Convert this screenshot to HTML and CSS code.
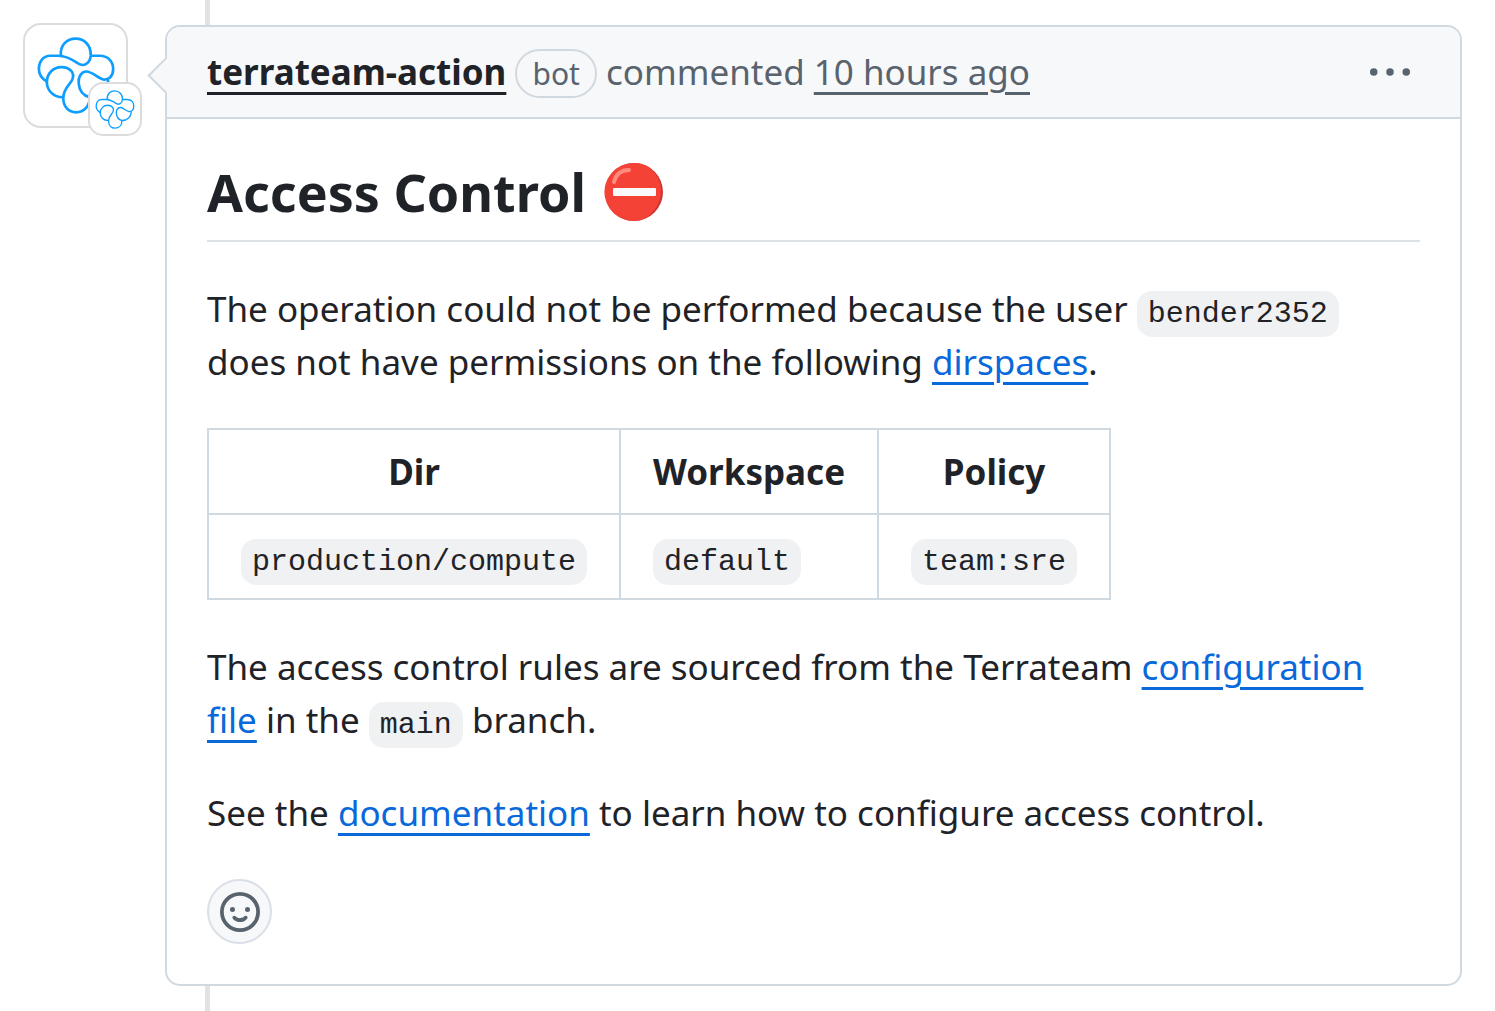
FILE: index.html
```html
<!DOCTYPE html>
<html lang="en">
<head>
    <meta charset="UTF-8">
    <meta name="viewport" content="width=device-width, initial-scale=1.0">
    <title>Access Control</title>
    <link rel="stylesheet" href="styles.css">
</head>
<body>
    <svg width="0" height="0" class="sprite" aria-hidden="true">
        <symbol id="logo" viewBox="8 7 232 230">
            <path d="M79 63C75 30 98 12 123 12C149 12 169 32 168 62C166 87 147 97 130 86C110 72 92 63 70 63H47C25 63 13 82 13 102C13 119 22 132 37 140"/>
            <path d="M85 187C55 187 37 165 37 142C37 115 57 97 80 97C107 97 121 115 113 134C107 149 86 160 86 190C86 215 102 232 124 232C148 232 165 214 165 187"/>
            <path d="M168 63H195C222 63 235 82 235 103C235 124 222 136 205 134C190 130 172 110 155 110C139 110 130 128 132 145C134 170 148 183 165 187C197 187 219 165 220 135"/>
        </symbol>
    </svg>

    <main class="timeline">
        <a href="#" class="avatar" aria-label="terrateam-action">
            <svg class="avatar-logo"><use href="#logo"/></svg>
            <span class="avatar-badge">
                <svg class="badge-logo"><use href="#logo"/></svg>
            </span>
        </a>

        <article class="comment">
            <header class="comment-header">
                <div class="comment-meta">
                    <a href="#" class="author">terrateam-action</a>
                    <span class="label">bot</span>
                    <span>commented</span>
                    <a href="#" class="timestamp">10 hours ago</a>
                </div>
                <button class="menu-button" aria-label="Show options">
                    <svg width="40" height="40" viewBox="0 0 16 16"><path d="M8 9.5a1.5 1.5 0 1 0 0-3 1.5 1.5 0 0 0 0 3ZM1.5 9.5a1.5 1.5 0 1 0 0-3 1.5 1.5 0 0 0 0 3Zm13 0a1.5 1.5 0 1 0 0-3 1.5 1.5 0 0 0 0 3Z"/></svg>
                </button>
            </header>

            <div class="comment-body">
                <h1>
                    Access Control
                    <svg class="no-entry" viewBox="0 0 60 60" role="img" aria-label="No entry">
                        <circle cx="30" cy="30" r="29" fill="#c33"/>
                        <path d="M30 1a29 29 0 1 0 10 56C51 50 57 41 57 29 57 19 52 11 45 5A29 29 0 0 0 30 1Z" fill="#f44336"/>
                        <path d="M10 20C12 12 17 8 25 8" fill="none" stroke="#ff8a80" stroke-width="4" stroke-linecap="round"/>
                        <rect x="9" y="26" width="43" height="8" rx="1" fill="#fafafa"/>
                    </svg>
                </h1>
                <p>The operation could not be performed because the user <code>bender2352</code> does not have permissions on the following <a href="#">dirspaces</a>.</p>
                <table>
                    <thead>
                        <tr>
                            <th>Dir</th>
                            <th>Workspace</th>
                            <th>Policy</th>
                        </tr>
                    </thead>
                    <tbody>
                        <tr>
                            <td><code>production/compute</code></td>
                            <td><code>default</code></td>
                            <td><code>team:sre</code></td>
                        </tr>
                    </tbody>
                </table>
                <p>The access control rules are sourced from the Terrateam <a href="#">configuration file</a> in the <code>main</code> branch.</p>
                <p>See the <a href="#">documentation</a> to learn how to configure access control.</p>
                <button class="reaction-button" aria-label="Add reaction">
                    <svg width="40" height="40" viewBox="0 0 16 16"><path d="M8 0a8 8 0 1 1 0 16A8 8 0 0 1 8 0ZM1.5 8a6.5 6.5 0 1 0 13 0 6.5 6.5 0 0 0-13 0Zm3.82 1.636a.75.75 0 0 1 1.038.175l.007.009c.103.118.22.222.35.31.264.178.683.37 1.285.37.602 0 1.02-.192 1.285-.371.13-.088.247-.192.35-.31l.007-.008a.75.75 0 0 1 1.222.87l-.022-.015c.02.013.021.015.021.015v.001l-.001.002-.002.003-.005.007-.014.019a2.066 2.066 0 0 1-.184.213c-.16.166-.338.316-.53.445-.63.418-1.37.638-2.127.629-.946 0-1.652-.308-2.126-.63a3.331 3.331 0 0 1-.715-.657l-.014-.02-.005-.006-.002-.003v-.002h-.001l.613-.432-.614.43a.75.75 0 0 1 .183-1.044ZM12 7a1 1 0 1 1-2 0 1 1 0 0 1 2 0ZM5 8a1 1 0 1 1 0-2 1 1 0 0 1 0 2Z"/></svg>
                </button>
            </div>
        </article>
    </main>
</body>
</html>
```

FILE: styles.css
```css
* {
    box-sizing: border-box;
}
body {
    margin: 0;
    background-color: #fff;
    color: #1f2328;
    font-family: "Noto Sans", sans-serif;
    font-size: 35px;
    line-height: 53px;
}
a {
    color: #0969da;
    text-decoration: underline;
    text-decoration-thickness: 3px;
    text-underline-offset: 7px;
}
button {
    padding: 0;
    border: none;
    background: none;
    color: #59636e;
    cursor: pointer;
}
button svg {
    display: block;
    fill: currentColor;
}
.sprite {
    position: absolute;
}
.timeline {
    position: relative;
    display: flex;
    align-items: flex-start;
    gap: 37px;
    min-height: 100vh;
    padding: 25px 33px 24px 23px;
}
/* vertical line running behind the comment */
.timeline::before {
    content: "";
    position: absolute;
    top: 0;
    bottom: 0;
    left: 205px;
    width: 5px;
    background-color: #dfe3e8;
}
.avatar {
    position: relative;
    display: flex;
    align-items: center;
    justify-content: center;
    flex: none;
    width: 105px;
    height: 105px;
    margin-top: -2px;
    border: 2px solid #dcdcdc;
    border-radius: 18px;
    background-color: #fff;
}
.avatar svg {
    fill: none;
    stroke: #0d9eff;
    stroke-width: 8px;
}
.avatar-logo {
    width: 78px;
    height: 77px;
}
.avatar-badge {
    position: absolute;
    right: -16px;
    bottom: -10px;
    display: flex;
    align-items: center;
    justify-content: center;
    width: 54px;
    height: 54px;
    border: 2px solid #dcdcdc;
    border-radius: 15px;
    background-color: #fff;
}
.badge-logo {
    width: 40px;
    height: 39px;
}
.comment {
    position: relative;
    flex: 1;
    min-width: 0;
    border: 2px solid #d1d9e0;
    border-radius: 15px;
    background-color: #fff;
}
/* arrow pointing at the avatar */
.comment::before {
    content: "";
    position: absolute;
    top: 35px;
    left: -14px;
    width: 25px;
    height: 25px;
    border: solid #d1d9e0;
    border-width: 0 0 2px 2px;
    background-color: #f6f8fa;
    transform: rotate(45deg);
}
.comment-header {
    position: relative;
    display: flex;
    align-items: center;
    justify-content: space-between;
    padding: 18px 50px 19px 40px;
    border-bottom: 2px solid #d1d9e0;
    border-radius: 13px 13px 0 0;
    background-color: #f6f8fa;
    color: #59636e;
}
.author {
    color: #1f2328;
    font-weight: 700;
}
.timestamp {
    color: #59636e;
}
.label {
    display: inline-block;
    padding: 0 15px;
    border: 2px solid #d1d9e0;
    border-radius: 25px;
    font-size: 30px;
    line-height: 45px;
}
.comment-body {
    padding: 40px;
}
h1 {
    display: flex;
    align-items: center;
    gap: 18px;
    margin: 0 0 40px;
    padding-bottom: 15px;
    border-bottom: 2px solid #dde2e7;
    font-size: 52px;
    font-weight: 700;
    line-height: 66px;
}
.no-entry {
    flex: none;
    width: 60px;
    height: 60px;
}
p {
    margin: 0 0 40px;
}
code {
    padding: 6px 11px;
    border-radius: 15px;
    background-color: #eff1f3;
    font-family: "Liberation Mono", monospace;
    font-size: 30px;
    line-height: 30px;
}
table {
    margin-bottom: 40px;
    border-collapse: collapse;
}
th,
td {
    padding: 15px 32px;
    border: 2px solid #d1d9e0;
    text-align: left;
}
th {
    font-weight: 700;
    text-align: center;
}
.reaction-button {
    display: flex;
    align-items: center;
    justify-content: center;
    width: 65px;
    height: 65px;
    border: 2px solid #d9e0e7;
    border-radius: 50%;
    background-color: #f6f8fa;
}
```
